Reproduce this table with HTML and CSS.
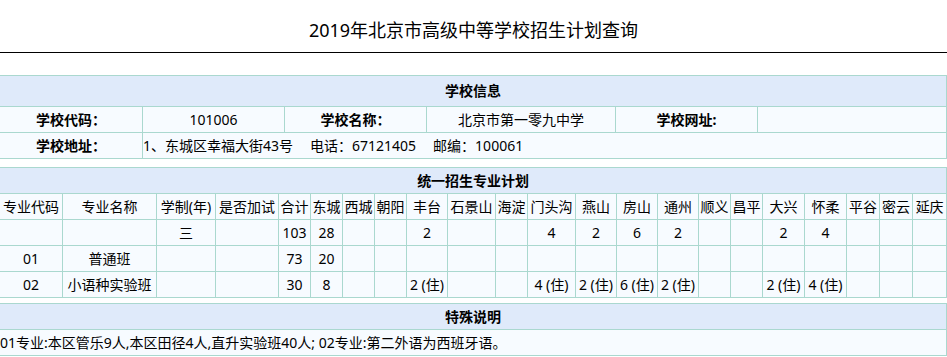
FILE: index.html
```html
<!DOCTYPE html>
<html lang="zh-CN">
<head>
<meta charset="utf-8">
<title>2019年北京市高级中等学校招生计划查询</title>
<link rel="stylesheet" href="styles.css">
</head>
<body>
<div class="title">2019年北京市高级中等学校招生计划查询</div>
<div class="content">
  <table class="grid info">
    <colgroup><col><col><col><col><col><col></colgroup>
    <tr class="head tall"><th colspan="6">学校信息</th></tr>
    <tr>
      <td class="label">学校代码<span class="colon">：</span></td>
      <td>101006</td>
      <td class="label">学校名称<span class="colon">：</span></td>
      <td>北京市第一零九中学</td>
      <td class="label">学校网址:</td>
      <td></td>
    </tr>
    <tr>
      <td class="label">学校地址<span class="colon">：</span></td>
      <td colspan="5" class="left">1、东城区幸福大街43号<span class="sep"></span>电话<span class="colon">：</span>67121405<span class="sep"></span>邮编<span class="colon">：</span>100061</td>
    </tr>
  </table>

  <table class="grid plan">
    <colgroup>
      <col><col><col><col><col><col><col><col><col><col><col>
      <col><col><col><col><col><col><col><col><col><col><col>
    </colgroup>
    <tr class="head"><th colspan="22">统一招生专业计划</th></tr>
    <tr>
      <td>专业代码</td><td>专业名称</td><td>学制(年)</td><td>是否加试</td><td>合计</td><td>东城</td><td>西城</td><td>朝阳</td><td>丰台</td><td>石景山</td><td>海淀</td><td>门头沟</td><td>燕山</td><td>房山</td><td>通州</td><td>顺义</td><td>昌平</td><td>大兴</td><td>怀柔</td><td>平谷</td><td>密云</td><td>延庆</td>
    </tr>
    <tr>
      <td></td><td></td><td>三</td><td></td><td>103</td><td>28</td><td></td><td></td><td>2</td><td></td><td></td><td>4</td><td>2</td><td>6</td><td>2</td><td></td><td></td><td>2</td><td>4</td><td></td><td></td><td></td>
    </tr>
    <tr>
      <td>01</td><td>普通班</td><td></td><td></td><td>73</td><td>20</td><td></td><td></td><td></td><td></td><td></td><td></td><td></td><td></td><td></td><td></td><td></td><td></td><td></td><td></td><td></td><td></td>
    </tr>
    <tr>
      <td>02</td><td>小语种实验班</td><td></td><td></td><td>30</td><td>8</td><td></td><td></td><td>2 (住)</td><td></td><td></td><td>4 (住)</td><td>2 (住)</td><td>6 (住)</td><td>2 (住)</td><td></td><td></td><td>2 (住)</td><td>4 (住)</td><td></td><td></td><td></td>
    </tr>
  </table>

  <table class="grid note">
    <tr class="head"><th>特殊说明</th></tr>
    <tr><td class="left">01专业:本区管乐9人,本区田径4人,直升实验班40人; 02专业:第二外语为西班牙语。</td></tr>
  </table>
</div>
</body>
</html>
```

FILE: styles.css
```css
html, body {
  margin: 0;
  padding: 0;
  background: #ffffff;
}

body {
  font-family: "Noto Sans", "Noto Sans CJK SC", sans-serif;
  color: #000;
  width: 947px;
  overflow: hidden;
}

.title {
  font-family: "Noto Sans", "Noto Sans CJK SC", sans-serif;
  font-size: 18px;
  line-height: 24px;
  text-align: center;
  padding: 18px 0 10px;
  border-bottom: 1px solid #000;
}

.content {
  margin-left: -1px;
  padding-top: 22px;
}

.grid {
  width: 948px;
  border-collapse: collapse;
  table-layout: fixed;
  font-size: 14px;
  background: #f7fbff;
}

.grid tr {
  height: 26px;
}

.grid .head.tall {
  height: 31px;
}

.grid th,
.grid td {
  border: 1px solid #aad8cf;
  padding: 0;
  line-height: 24px;
  text-align: center;
  white-space: nowrap;
  overflow: hidden;
}

.grid .head th {
  background: #dfeafa;
  font-weight: bold;
}

.grid td.label {
  font-weight: bold;
}

.grid td.left {
  text-align: left;
}

.colon {
  font-family: "Noto Sans CJK TC", sans-serif;
}

.sep {
  display: inline-block;
  width: 17px;
}

.info {
  margin-bottom: 8px;
}

.plan {
  margin-bottom: 5px;
}

.info col:nth-child(1) { width: 143px; }
.info col:nth-child(2) { width: 142px; }
.info col:nth-child(3) { width: 142px; }
.info col:nth-child(4) { width: 189px; }
.info col:nth-child(5) { width: 142px; }
.info col:nth-child(6) { width: 189px; }

.plan col:nth-child(1) { width: 63px; }
.plan col:nth-child(2) { width: 94px; }
.plan col:nth-child(3) { width: 59px; }
.plan col:nth-child(4) { width: 63px; }
.plan col:nth-child(5) { width: 32px; }
.plan col:nth-child(6) { width: 32px; }
.plan col:nth-child(7) { width: 32px; }
.plan col:nth-child(8) { width: 32px; }
.plan col:nth-child(9) { width: 41px; }
.plan col:nth-child(10) { width: 48px; }
.plan col:nth-child(11) { width: 32px; }
.plan col:nth-child(12) { width: 48px; }
.plan col:nth-child(13) { width: 41px; }
.plan col:nth-child(14) { width: 41px; }
.plan col:nth-child(15) { width: 41px; }
.plan col:nth-child(16) { width: 32px; }
.plan col:nth-child(17) { width: 32px; }
.plan col:nth-child(18) { width: 42px; }
.plan col:nth-child(19) { width: 42px; }
.plan col:nth-child(20) { width: 33px; }
.plan col:nth-child(21) { width: 33px; }
.plan col:nth-child(22) { width: 34px; }
```
